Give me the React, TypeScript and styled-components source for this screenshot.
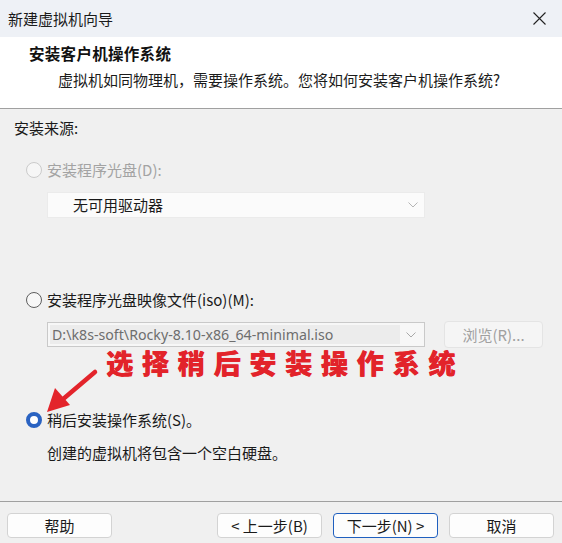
import React from "react";
import styled, { createGlobalStyle, css } from "styled-components";

const GlobalStyle = createGlobalStyle`
  html, body { margin: 0; padding: 0; }
  body {
    width: 562px;
    height: 543px;
    overflow: hidden;
    font-family: "Noto Sans CJK SC", "Liberation Sans", sans-serif;
    font-size: 15px;
    color: #1a1a1a;
  }
`;

const Window = styled.div`
  width: 562px;
  height: 543px;
  display: flex;
  flex-direction: column;
  background: #f0f0f0;
`;

const TitleBar = styled.div`
  height: 37px;
  flex: none;
  display: flex;
  align-items: center;
  justify-content: space-between;
  padding: 0 10px 0 8px;
  background: #eef1f6;
`;

const TitleText = styled.span`
  font-size: 15px;
  line-height: 20px;
  color: #1b1b1b;
`;

const CloseBtn = styled.span`
  width: 26px;
  height: 26px;
  display: flex;
  align-items: center;
  justify-content: center;
`;

const Header = styled.div`
  flex: none;
  background: #ffffff;
  border-bottom: 1px solid #a0a0a0;
  padding: 6px 0 0 29px;
  box-sizing: border-box;
  height: 72px;
`;

const HeaderTitle = styled.div`
  font-size: 15.5px;
  font-weight: 700;
  line-height: 20px;
  color: #111;
  letter-spacing: 0.3px;
`;

const HeaderSub = styled.div`
  margin: 7px 0 0 29px;
  font-size: 15px;
  line-height: 20px;
  color: #1b1b1b;
`;

const Content = styled.div`
  position: relative;
  flex: 1;
  padding: 9px 0 0 14px;
  display: flex;
  flex-direction: column;
  align-items: flex-start;
`;

const Label = styled.div`
  line-height: 20px;
`;

const RadioRow = styled.div<{ $top: number; $disabled?: boolean }>`
  margin: ${(p) => p.$top}px 0 0 12px;
  display: flex;
  align-items: center;
  gap: 5px;
  line-height: 20px;
  color: ${(p) => (p.$disabled ? "#a3a3a3" : "#1a1a1a")};
`;

const RadioCircle = styled.span<{ $state: "disabled" | "off" | "on" }>`
  width: 16px;
  height: 16px;
  box-sizing: border-box;
  border-radius: 50%;
  flex: none;
  ${(p) =>
    p.$state === "disabled"
      ? css`
          border: 1px solid #cbcbcb;
          background: #f6f6f6;
        `
      : p.$state === "off"
      ? css`
          border: 1px solid #5e5e5e;
          background: #f7f7f7;
        `
      : css`
          border: 4.5px solid #2a63c2;
          background: #ffffff;
        `}
`;

const Indented = styled.div<{ $top: number }>`
  margin: ${(p) => p.$top}px 0 0 33px;
  display: flex;
  align-items: flex-start;
  gap: 19px;
`;

const Dropdown = styled.div`
  width: 378px;
  height: 26px;
  box-sizing: border-box;
  background: #fbfbfb;
  border: 1px solid #ebebeb;
  display: flex;
  align-items: center;
  justify-content: space-between;
  padding: 0 6px 0 25px;
  line-height: 20px;
  color: #1a1a1a;
`;

const Chevron = ({ color }: { color: string }) => (
  <svg width="10" height="6" viewBox="0 0 10 6">
    <path d="M0.5 0.5 L5 5 L9.5 0.5" fill="none" stroke={color} strokeWidth="1" />
  </svg>
);

const Combo = styled.div`
  width: 378px;
  height: 25px;
  box-sizing: border-box;
  border: 1px solid #c9c9c9;
  background: #f7f7f7;
  display: flex;
  align-items: stretch;
  padding: 2px;
`;

const ComboText = styled.div`
  flex: 1;
  background: #ececec;
  color: #6e6e6e;
  font-family: "Noto Sans", "Liberation Sans", sans-serif;
  font-size: 14.2px;
  line-height: 19px;
  padding-left: 2px;
  white-space: nowrap;
  overflow: hidden;
`;

const ComboArrow = styled.div`
  width: 22px;
  display: flex;
  align-items: center;
  justify-content: center;
`;

const BrowseBtn = styled.div`
  width: 99px;
  height: 27px;
  box-sizing: border-box;
  border: 1px solid #e4e4e4;
  border-radius: 4px;
  background: #f5f5f5;
  color: #a0a0a0;
  display: flex;
  align-items: center;
  justify-content: center;
  line-height: 20px;
  margin-top: -1px;
`;

const Desc = styled.div`
  margin: 13px 0 0 33px;
  line-height: 20px;
`;

const Annotation = styled.div`
  position: absolute;
  left: 106px;
  top: 239px;
  font-size: 27px;
  font-weight: 900;
  letter-spacing: 8.8px;
  line-height: 30px;
  color: #e2232a;
  text-shadow: 0.5px 0 0 #e2232a, 0 0 1px #f5c0c0;
  white-space: nowrap;
`;

const ArrowSvg = styled.svg`
  position: absolute;
  left: 0;
  top: 0;
  pointer-events: none;
`;

const Footer = styled.div`
  height: 42px;
  flex: none;
  box-sizing: border-box;
  border-top: 1px solid #a0a0a0;
  padding: 11px 8px 0 7px;
  display: flex;
  align-items: flex-start;
`;

const Spacer = styled.div`
  flex: 1;
`;

const NavGroup = styled.div`
  display: flex;
  gap: 11px;
`;

const Button = styled.div<{ $primary?: boolean }>`
  width: 105px;
  height: 25px;
  box-sizing: border-box;
  border-radius: 4px;
  border: 1px solid ${(p) => (p.$primary ? "#1f5fbf" : "#d3d3d3")};
  background: #fdfdfd;
  display: flex;
  align-items: center;
  justify-content: center;
  line-height: 20px;
  color: #1a1a1a;
  white-space: pre;
`;

export default function App() {
  return (
    <>
      <GlobalStyle />
      <Window>
        <TitleBar>
          <TitleText>新建虚拟机向导</TitleText>
          <CloseBtn>
            <svg width="13" height="13" viewBox="0 0 13 13">
              <path d="M0.5 0.5 L12.5 12.5 M12.5 0.5 L0.5 12.5" stroke="#222" strokeWidth="1.1" />
            </svg>
          </CloseBtn>
        </TitleBar>
        <Header>
          <HeaderTitle>安装客户机操作系统</HeaderTitle>
          <HeaderSub>虚拟机如同物理机，需要操作系统。您将如何安装客户机操作系统?</HeaderSub>
        </Header>
        <Content>
          <Label>安装来源:</Label>
          <RadioRow $top={22} $disabled>
            <RadioCircle $state="disabled" />
            安装程序光盘(D):
          </RadioRow>
          <Indented $top={12}>
            <Dropdown>
              无可用驱动器
              <Chevron color="#b5b5b5" />
            </Dropdown>
          </Indented>
          <RadioRow $top={72}>
            <RadioCircle $state="off" />
            安装程序光盘映像文件(iso)(M):
          </RadioRow>
          <Indented $top={12}>
            <Combo>
              <ComboText>D:\k8s-soft\Rocky-8.10-x86_64-minimal.iso</ComboText>
              <ComboArrow>
                <Chevron color="#a8a8a8" />
              </ComboArrow>
            </Combo>
            <BrowseBtn>浏览(R)...</BrowseBtn>
          </Indented>
          <RadioRow $top={62}>
            <RadioCircle $state="on" />
            稍后安装操作系统(S)。
          </RadioRow>
          <Desc>创建的虚拟机将包含一个空白硬盘。</Desc>
          <Annotation>选择稍后安装操作系统</Annotation>
          <ArrowSvg width="140" height="320" viewBox="0 0 140 320">
            <path d="M95 263 L62 291" stroke="#e3242b" strokeWidth="4.5" strokeLinecap="round" />
            <path d="M47 303 L55 279 L70 296 Z" fill="#e3242b" />
          </ArrowSvg>
        </Content>
        <Footer>
          <Button>帮助</Button>
          <Spacer />
          <NavGroup>
            <Button>{"< 上一步(B)"}</Button>
            <Button $primary>{"下一步(N) >"}</Button>
            <Button>取消</Button>
          </NavGroup>
        </Footer>
      </Window>
    </>
  );
}
